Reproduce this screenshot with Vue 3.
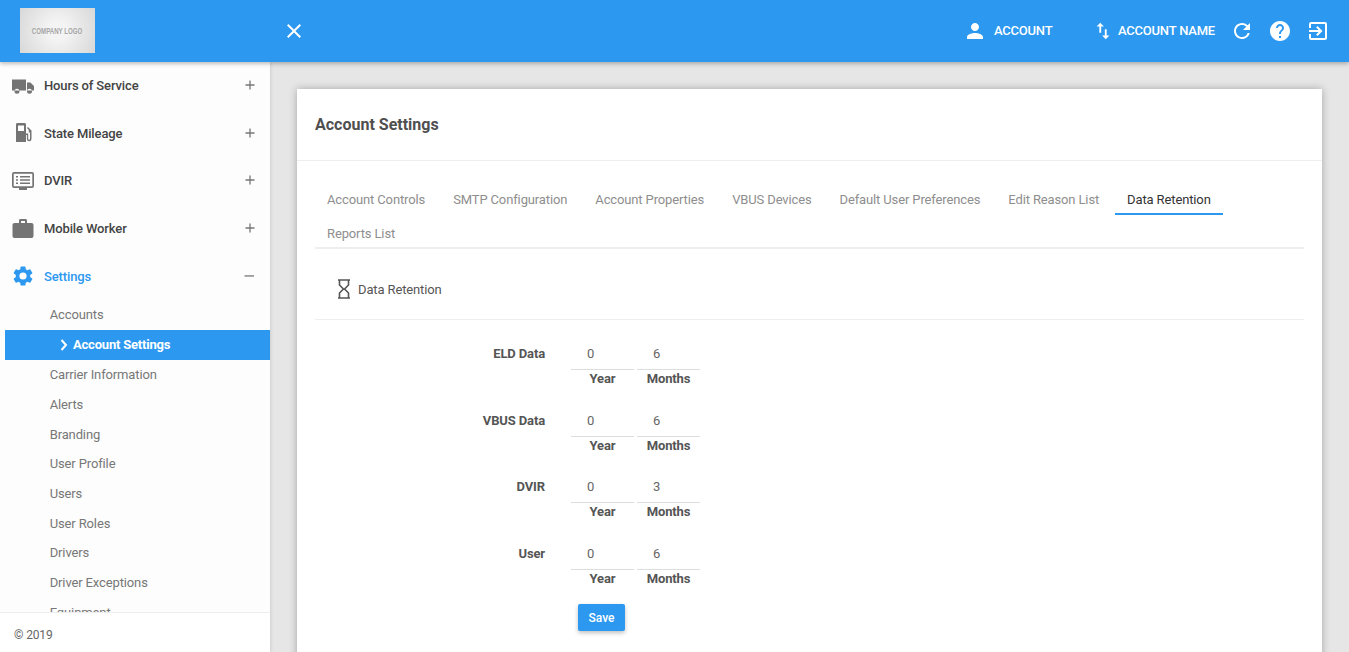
<template>
  <div class="page">
    <header class="topbar">
      <div class="logo-wrap">
        <div class="logo"><span>COMPANY LOGO</span></div>
      </div>
      <svg class="close-icon" viewBox="0 0 24 24" width="24" height="24"><path d="M19 6.41 17.59 5 12 10.59 6.41 5 5 6.41 10.59 12 5 17.59 6.41 19 12 13.41 17.59 19 19 17.59 13.41 12z" fill="#fff"/></svg>
      <div class="top-right">
        <div class="top-item account">
          <svg viewBox="0 0 24 24" width="24" height="24"><path d="M12 12c2.21 0 4-1.79 4-4s-1.79-4-4-4-4 1.79-4 4 1.79 4 4 4zm0 2c-2.67 0-8 1.34-8 4v2h16v-2c0-2.66-5.33-4-8-4z" fill="#fff"/></svg>
          <span>ACCOUNT</span>
        </div>
        <div class="top-item switch">
          <svg viewBox="0 0 24 24" width="22" height="22"><path d="M16 17.01V10h-2v7.01h-3L15 21l4-3.99h-3zM9 3 5 6.99h3V14h2V6.99h3L9 3z" fill="#fff"/></svg>
          <span>ACCOUNT NAME</span>
        </div>
        <svg class="btn-icon" viewBox="0 0 24 24" width="24" height="24"><path d="M17.65 6.35A7.958 7.958 0 0 0 12 4c-4.42 0-7.99 3.58-7.99 8s3.57 8 7.99 8c3.73 0 6.84-2.55 7.73-6h-2.08A5.99 5.99 0 0 1 12 18c-3.31 0-6-2.69-6-6s2.69-6 6-6c1.66 0 3.14.69 4.22 1.78L13 11h7V4l-2.35 2.35z" fill="#fff"/></svg>
        <svg class="btn-icon" viewBox="0 0 24 24" width="24" height="24"><path d="M12 2C6.48 2 2 6.48 2 12s4.48 10 10 10 10-4.48 10-10S17.52 2 12 2zm1 17h-2v-2h2v2zm2.07-7.75-.9.92C13.45 12.9 13 13.5 13 15h-2v-.5c0-1.1.45-2.1 1.17-2.83l1.24-1.26c.37-.36.59-.86.59-1.41 0-1.1-.9-2-2-2s-2 .9-2 2H8c0-2.21 1.79-4 4-4s4 1.79 4 4c0 .88-.36 1.68-.93 2.25z" fill="#fff"/></svg>
        <svg class="btn-icon" viewBox="0 0 24 24" width="24" height="24"><path d="M10.09 15.59 11.5 17l5-5-5-5-1.41 1.41L12.67 11H3v2h9.67l-2.58 2.59zM19 3H5a2 2 0 0 0-2 2v4h2V5h14v14H5v-4H3v4a2 2 0 0 0 2 2h14c1.1 0 2-.9 2-2V5c0-1.1-.9-2-2-2z" fill="#fff"/></svg>
      </div>
    </header>

    <div class="body-row">
      <aside class="sidebar">
        <div class="menu">
          <div v-for="m in mainMenu" :key="m.label" class="menu-item" :class="{ open: m.open }">
            <svg class="menu-icon" viewBox="0 0 24 24" width="24" height="24"><path :d="m.icon" fill="currentColor" fill-rule="evenodd"/></svg>
            <span class="menu-label">{{ m.label }}</span>
            <span class="toggle">
              <svg viewBox="0 0 12 12" width="12" height="12"><path :d="m.open ? 'M0.500 5.300h9.500v1.300H0.500z' : 'M5.350 1.500h1.300v3.850h3.850v1.300H6.650v3.850h-1.300V6.650H1.500v-1.300h3.850z'" fill="currentColor"/></svg>
            </span>
          </div>
          <div class="submenu">
            <div v-for="s in subMenu" :key="s" class="sub-item" :class="{ active: s === 'Account Settings' }">
              <svg v-if="s === 'Account Settings'" class="chev" viewBox="0 0 8 12" width="8" height="12"><path d="M1.500 1 6 6l-4.500 5" fill="none" stroke="#fff" stroke-width="2"/></svg>
              {{ s }}
            </div>
          </div>
        </div>
        <div class="foot">© 2019</div>
      </aside>

      <main class="content">
        <section class="card">
          <h1 class="card-title">Account Settings</h1>
          <div class="card-body">
            <nav class="tabs">
              <a v-for="t in tabs" :key="t" class="tab" :class="{ active: t === 'Data Retention' }">{{ t }}</a>
            </nav>
            <div class="section-head">
              <svg viewBox="0 0 14 20" width="14" height="20"><path d="M2.500 1v5L6.400 10 2.500 14v5M11.500 1v5L7.600 10l3.900 4v5M1 1h12M1 19h12" fill="none" stroke="#555" stroke-width="1.600"/></svg>
              <span>Data Retention</span>
            </div>
            <div class="form">
              <div v-for="r in rows" :key="r.label" class="row">
                <label class="row-label">{{ r.label }}</label>
                <div class="field">
                  <div class="value">{{ r.year }}</div>
                  <div class="unit">Year</div>
                </div>
                <div class="field">
                  <div class="value">{{ r.months }}</div>
                  <div class="unit">Months</div>
                </div>
              </div>
              <button class="save">Save</button>
            </div>
          </div>
        </section>
      </main>
    </div>
  </div>
</template>

<script setup>
const mainMenu = [
  { label: 'Hours of Service', icon: 'M1 5.500h14V16.500H1zM16 8.500h3.500L23 12v4.500H16z M6 19.800a2.500 2.500 0 1 0 0-5 2.500 2.500 0 0 0 0 5zm12.500 0a2.500 2.500 0 1 0 0-5 2.500 2.500 0 0 0 0 5z' },
  { label: 'State Mileage', icon: 'M5 3.500C5 2.700 5.700 2 6.500 2h7c.8 0 1.500.7 1.500 1.500V21H5zM7 4.500V10h6V4.500zM16 7l1-1 3.500 3.500V18a2.300 2.300 0 0 1-4.600 0v-4H15v-1.500h2.200V18c0 1.100 1.800 1.100 1.800 0v-6.500h-1.200V9z' },
  { label: 'DVIR', icon: 'M3 3h18a2 2 0 0 1 2 2v12a2 2 0 0 1-2 2h-5v2H8v-2H3a2 2 0 0 1-2-2V5a2 2 0 0 1 2-2zm0 1.800c-.2 0-.3.1-.3.3v11.800c0 .2.100.3.300.3h18c.2 0 .3-.1.300-.3V5.100c0-.2-.1-.3-.3-.3zM5 7h2v1.600H5zm4 0h10v1.600H9zm-4 3.200h2v1.600H5zm4 0h10v1.600H9zm-4 3.200h2V15H5zm4 0h10V15H9z' },
  { label: 'Mobile Worker', icon: 'M8 6V3.500C8 2.700 8.700 2 9.500 2h5c.8 0 1.500.7 1.500 1.500V6h4.500c1.100 0 2 .9 2 2v11c0 1.100-.9 2-2 2h-17c-1.100 0-2-.9-2-2V8c0-1.100.9-2 2-2zm2-2v2h4V4z' },
  { label: 'Settings', open: true, icon: 'M19.140 12.940c.04-.3.060-.61.060-.94 0-.32-.020-.64-.070-.94l2.030-1.580a.49.49 0 0 0 .12-.61l-1.920-3.320a.49.49 0 0 0-.59-.22l-2.390.96c-.5-.38-1.030-.7-1.620-.94l-.36-2.540a.48.48 0 0 0-.48-.41h-3.840a.47.47 0 0 0-.47.41l-.36 2.540c-.59.24-1.130.57-1.620.94l-2.390-.96a.48.48 0 0 0-.59.22L2.740 8.870c-.12.21-.08.47.12.61l2.030 1.580c-.05.3-.09.63-.09.94s.020.64.070.94l-2.030 1.580a.49.49 0 0 0-.12.61l1.920 3.320c.12.22.37.29.59.22l2.390-.96c.5.38 1.030.7 1.620.94l.36 2.540c.05.24.24.41.48.41h3.840c.24 0 .44-.17.47-.41l.36-2.540c.59-.24 1.130-.56 1.620-.94l2.390.96c.22.080.47 0 .59-.22l1.920-3.320a.49.49 0 0 0-.12-.61l-2.010-1.580zM12 15.600a3.600 3.600 0 1 1 0-7.200 3.600 3.600 0 0 1 0 7.200z' }
]

const subMenu = ['Accounts', 'Account Settings', 'Carrier Information', 'Alerts', 'Branding', 'User Profile', 'Users', 'User Roles', 'Drivers', 'Driver Exceptions', 'Equipment']

const tabs = ['Account Controls', 'SMTP Configuration', 'Account Properties', 'VBUS Devices', 'Default User Preferences', 'Edit Reason List', 'Data Retention', 'Reports List']

const rows = [
  { label: 'ELD Data', year: 0, months: 6 },
  { label: 'VBUS Data', year: 0, months: 6 },
  { label: 'DVIR', year: 0, months: 3 },
  { label: 'User', year: 0, months: 6 }
]
</script>

<style>
html, body { margin: 0; height: 100%; overflow: hidden; }
</style>

<style scoped>
.page {
  width: 1349px;
  height: 652px;
  display: flex;
  flex-direction: column;
  overflow: hidden;
  background: #e6e6e6;
  font-family: Roboto, "Liberation Sans", sans-serif;
  font-size: 13px;
  letter-spacing: -0.13px;
  color: #555;
}
.topbar {
  height: 62px;
  flex: none;
  display: flex;
  align-items: center;
  background: #2c98f0;
  color: #fff;
  box-shadow: 0 2px 4px rgba(0,0,0,0.25);
  position: relative;
  z-index: 2;
}
.logo-wrap { width: 282px; padding-left: 20px; box-sizing: border-box; flex: none; }
.logo {
  width: 75px;
  height: 45px;
  margin-top: -1px;
  display: flex;
  align-items: center;
  justify-content: center;
  background: radial-gradient(circle, #f4f4f4 20%, #d8d8d8 100%);
}
.logo span {
  font-family: "Liberation Sans", sans-serif;
  font-weight: 700;
  font-size: 9px;
  letter-spacing: 0;
  color: #a6a6a6;
  white-space: nowrap;
  transform: scaleX(0.68);
}
.top-right { margin-left: auto; display: flex; align-items: center; height: 100%; padding-right: 19px; }
.top-item { display: flex; align-items: center; font-size: 13px; font-weight: 500; letter-spacing: -0.2px; }
.top-item span { margin-top: -2px; }
.account { width: 129px; }
.account svg { margin-right: 7px; }
.switch { margin-right: 15px; }
.switch svg { margin-right: 4px; }
.btn-icon + .btn-icon { margin-left: 14px; }
.body-row { flex: 1; display: flex; min-height: 0; }
.sidebar {
  width: 270px;
  flex: none;
  display: flex;
  flex-direction: column;
  background: #fff;
  box-shadow: 1px 0 3px rgba(0,0,0,0.1);
}
.menu { flex: 1; overflow: hidden; min-height: 0; background: #fdfdfd; }
.menu-item {
  height: 47.6px;
  display: flex;
  align-items: center;
  padding-left: 11px;
  color: #747474;
}
.menu-icon { flex: none; }
.menu-label { margin-left: 9px; font-weight: 500; color: #444; }
.toggle { margin-left: auto; margin-right: 14px; margin-top: -1px; display: flex; color: #777; }
.menu-item.open, .menu-item.open .menu-label { color: #2c98f0; }
.menu-item.open .toggle { color: #777; }
.submenu { padding-left: 5px; margin-top: 0.5px; }
.sub-item {
  height: 29.7px;
  line-height: 29.7px;
  padding-left: 44.7px;
  color: #777;
  white-space: nowrap;
}
.sub-item.active {
  background: #2c98f0;
  color: #fff;
  font-weight: 700;
  letter-spacing: -0.2px;
  padding-left: 55px;
  display: flex;
  align-items: center;
  gap: 5px;
  height: 30px;
}
.foot {
  height: 40px;
  flex: none;
  box-sizing: border-box;
  border-top: 1px solid #eee;
  display: flex;
  align-items: center;
  padding: 4px 0 0 14px;
  font-size: 12px;
  background: #fff;
  color: #666;
}
.content { flex: 1; padding: 27px 27px 0; min-width: 0; }
.card {
  background: #fff;
  height: 600px;
  box-shadow: 0 0 8px rgba(0,0,0,0.28);
}
.card-title {
  margin: 0;
  height: 72px;
  line-height: 71px;
  padding-left: 18px;
  box-sizing: border-box;
  border-bottom: 1px solid #eee;
  font-size: 16px;
  font-weight: 700;
  letter-spacing: 0;
  color: #4f4f4f;
}
.card-body { padding: 22px 18px 0; }
.tabs {
  display: flex;
  flex-wrap: wrap;
  height: 66px;
  box-sizing: border-box;
  border-bottom: 2px solid #eee;
}
.tab {
  padding: 0 12px;
  margin-right: 4px;
  height: 32px;
  margin-bottom: 2px;
  line-height: 34px;
  color: #8e8e8e;
  box-sizing: border-box;
  white-space: nowrap;
}
.tab.active { color: #333; border-bottom: 2px solid #2c98f0; }
.section-head {
  height: 71px;
  box-sizing: border-box;
  display: flex;
  align-items: center;
  gap: 7px;
  padding: 10px 0 0 22px;
  border-bottom: 1px solid #eee;
  color: #555;
}
.form { padding-top: 17px; }
.row {
  height: 66.5px;
  display: flex;
  align-items: flex-start;
}
.row-label {
  width: 230px;
  flex: none;
  text-align: right;
  font-weight: 700;
  margin-right: 26px;
  line-height: 34px;
}
.field { width: 63px; margin-right: 3px; }
.value {
  height: 32px;
  line-height: 33px;
  padding-left: 16px;
  border-bottom: 1px solid #ddd;
  color: #666;
}
.unit { text-align: center; font-weight: 700; line-height: 17px; }
.save {
  display: block;
  margin: 1px 0 0 263px;
  width: 47px;
  height: 27px;
  background: #2c98f0;
  border: none;
  border-radius: 2px;
  color: #fff;
  font-family: inherit;
  font-size: 12px;
  font-weight: 500;
  box-shadow: 0 2px 4px rgba(0,0,0,0.25);
}
</style>
